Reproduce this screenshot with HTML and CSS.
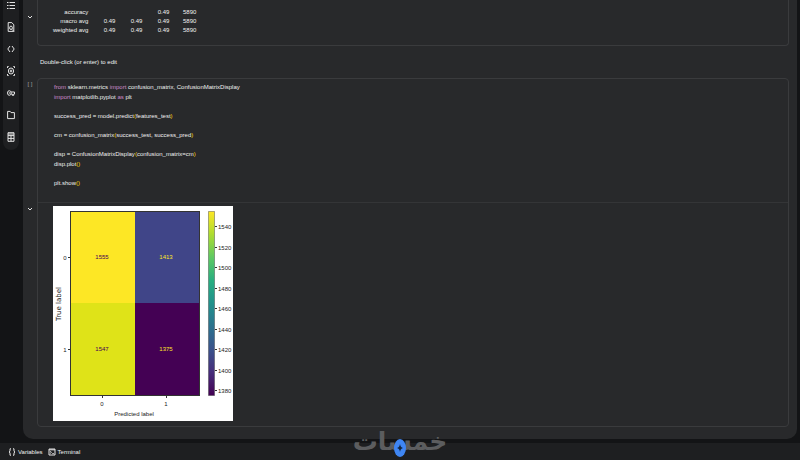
FILE: index.html
```
<!DOCTYPE html>
<html lang="en">
<head>
  <meta charset="UTF-8" />
  <meta name="viewport" content="width=device-width, initial-scale=1" />
  <title>Notebook</title>
  <link rel="stylesheet" href="styles.css">
</head>
<body>
  <div class="workspace">
    <nav class="rail" aria-label="Sidebar">
      <button class="rail-button" aria-label="Table of contents">
        <svg viewBox="0 0 8 10"><path d="M0 2.5h1.5M2.5 2.5H8M0 5.5h1.5M2.5 5.5H8M0 8.5h1.5M2.5 8.5H8" /></svg>
      </button>
      <button class="rail-button" aria-label="Find and replace">
        <svg viewBox="0 0 8 10"><path d="M1.2.6h3.6l2 2.2v6.6H1.2zM5 7.4 7 9.5" /><ellipse cx="4" cy="5.8" rx="1.4" ry="1.7" /></svg>
      </button>
      <button class="rail-button" aria-label="Code snippets">
        <svg viewBox="0 0 8 10"><path d="M3 2 .8 5 3 8M5 2l2.2 3L5 8" /></svg>
      </button>
      <button class="rail-button" aria-label="Inspect">
        <svg viewBox="0 0 8 10"><path d="M.5 2V.5h1.2M6.3.5h1.2V2M.5 8v1.5h1.2M6.3 9.5h1.2V8" /><ellipse cx="4" cy="5" rx="2.6" ry="3" /><ellipse cx="4" cy="5" rx=".8" ry="1" /></svg>
      </button>
      <button class="rail-button" aria-label="Secrets">
        <svg viewBox="0 0 8 10"><ellipse cx="2.3" cy="5" rx="1.8" ry="2.3" /><path d="M4 4h3.5v2h-.8v1.4H5.3V6H4" /><circle cx="2.3" cy="5" r=".3" /></svg>
      </button>
      <button class="rail-button" aria-label="Files">
        <svg viewBox="0 0 8 10"><path d="M.6 1.4h2.6l.8 1.2h3.4v6H.6z" /></svg>
      </button>
      <button class="rail-button" aria-label="Data table">
        <svg viewBox="0 0 8 10"><path d="M1 .7h6v8.6H1zM1 3.6h6M1 6.4h6M4 3.6v5.7M1 2h6" /></svg>
      </button>
    </nav>

    <main class="notebook">
      <section class="cell">
        <div class="gutter gutter-report">
          <button class="toggle" aria-label="Toggle output"><svg viewBox="0 0 6 6"><path d="m1 2 2 2 2-2" /></svg></button>
        </div>
        <div class="frame frame-report">
          <table class="report">
            <tr><th scope="row">accuracy</th><td></td><td></td><td>0.49</td><td>5890</td></tr>
            <tr><th scope="row">macro avg</th><td>0.49</td><td>0.49</td><td>0.49</td><td>5890</td></tr>
            <tr><th scope="row">weighted avg</th><td>0.49</td><td>0.49</td><td>0.49</td><td>5890</td></tr>
          </table>
        </div>
      </section>

      <p class="hint">Double-click (or enter) to edit</p>

      <section class="cell">
        <div class="gutter gutter-code">
          <span class="run">[ ]</span>
          <button class="toggle" aria-label="Toggle output"><svg viewBox="0 0 6 6"><path d="m1 2 2 2 2-2" /></svg></button>
        </div>
        <div class="frame">
          <div class="code">
            <div class="line"><b>from</b> sklearn.metrics <b>import</b> confusion_matrix, ConfusionMatrixDisplay</div>
            <div class="line"><b>import</b> matplotlib.pyplot <b>as</b> plt</div>
            <div class="line"></div>
            <div class="line">success_pred = model.predict<i>(</i>features_test<i>)</i></div>
            <div class="line"></div>
            <div class="line">cm = confusion_matrix<i>(</i>success_test, success_pred<i>)</i></div>
            <div class="line"></div>
            <div class="line">disp = ConfusionMatrixDisplay<i>(</i>confusion_matrix=cm<i>)</i></div>
            <div class="line">disp.plot<i>()</i></div>
            <div class="line"></div>
            <div class="line">plt.show<i>()</i></div>
          </div>
          <div class="output">
            <svg class="plot" viewBox="0 0 180 215" role="img" aria-label="Confusion matrix">
              <defs>
                <linearGradient id="viridis" x1="0" y1="0" x2="0" y2="1">
                  <stop offset="0" stop-color="#fde725" />
                  <stop offset=".125" stop-color="#addc30" />
                  <stop offset=".25" stop-color="#5ec962" />
                  <stop offset=".375" stop-color="#28ae80" />
                  <stop offset=".5" stop-color="#21918c" />
                  <stop offset=".625" stop-color="#2c728e" />
                  <stop offset=".75" stop-color="#3b528b" />
                  <stop offset=".875" stop-color="#472d7b" />
                  <stop offset="1" stop-color="#440154" />
                </linearGradient>
              </defs>
              <rect width="180" height="215" fill="#fff" stroke="none" />
              <g stroke="none" shape-rendering="crispEdges">
                <rect x="17" y="5" width="65" height="92" fill="#fde725" />
                <rect x="82" y="5" width="65" height="92" fill="#404588" />
                <rect x="17" y="97" width="65" height="93" fill="#dfe318" />
                <rect x="82" y="97" width="65" height="93" fill="#440154" />
              </g>
              <rect class="axis" x="17.5" y="5.5" width="129" height="184" />
              <rect class="axis colorbar" x="155.5" y="5.5" width="6" height="184" />
              <path class="axis" d="M15 51.5h2M15 143.5h2M49.5 190v2M113.5 190v2M162 20.5h2M162 41.5h2M162 61.5h2M162 82.5h2M162 102.5h2M162 123.5h2M162 143.5h2M162 164.5h2M162 184.5h2" />
              <g class="middle">
                <text class="on-light" x="49" y="53">1555</text>
                <text class="on-dark" x="113" y="53">1413</text>
                <text class="on-light" x="49" y="145">1547</text>
                <text class="on-dark" x="113" y="145">1375</text>
                <text x="12" y="54">0</text>
                <text x="12" y="146">1</text>
                <text x="49" y="200">0</text>
                <text x="113" y="200">1</text>
                <text x="81" y="210">Predicted label</text>
                <text class="y-label" transform="translate(8 98) rotate(-90)">True label</text>
              </g>
              <text x="165" y="23">1540</text>
              <text x="165" y="44">1520</text>
              <text x="165" y="64">1500</text>
              <text x="165" y="85">1480</text>
              <text x="165" y="105">1460</text>
              <text x="165" y="126">1440</text>
              <text x="165" y="146">1420</text>
              <text x="165" y="167">1400</text>
              <text x="165" y="187">1380</text>
            </svg>
          </div>
        </div>
      </section>
    </main>
  </div>

  <footer class="statusbar">
    <button class="status-button">
      <svg viewBox="0 0 8 8"><path d="M3 .8H2v2.4L1 4l1 .8v2.4h1M5 .8h1v2.4L7 4l-1 .8v2.4H5" /></svg>
      Variables
    </button>
    <button class="status-button">
      <svg viewBox="0 0 8 8"><path d="M1 1h6v6H1zM1 1.8h6M2.2 3.4l1.2 1-1.2 1M4.3 5.6h1.5" /></svg>
      Terminal
    </button>
  </footer>

  <div class="watermark" lang="ar" dir="rtl">خمسات</div>
  <button class="assistant" aria-label="Assistant">
    <svg viewBox="0 0 8 10"><path d="M4 1q.5 3.5 3 4-2.5.5-3 4-.5-3.5-3-4 2.5-.5 3-4z" /></svg>
  </button>
</body>
</html>
```
FILE: styles.css
```
* {
  box-sizing: border-box;
}

body {
  margin: 0;
  min-height: 100vh;
  display: flex;
  flex-direction: column;
  position: relative;
  overflow: hidden;
  background: #131416;
  color: #f0f0f0;
  font-family: "Liberation Sans", Arial, sans-serif;
  font-size: 6px;
}

button {
  padding: 0;
  border: 0;
  background: none;
  color: inherit;
  font: inherit;
  cursor: pointer;
}

svg {
  display: block;
  fill: none;
  stroke: #e4e4e4;
  stroke-width: 1;
}

.workspace {
  flex: 1;
  display: flex;
  align-items: flex-start;
  gap: 4px;
  padding-right: 3px;
}

.rail {
  display: flex;
  flex-direction: column;
  gap: 12px;
  width: 16px;
  margin-left: 3px;
  padding-bottom: 8px;
  align-items: center;
  border-radius: 0 0 8px 8px;
  background: #1e1f21;
}

.rail-button svg {
  width: 8px;
  height: 10px;
}

.notebook {
  flex: 1;
  padding: 0 8px 12px 0;
  border-radius: 0 0 10px 10px;
  background: #28292b;
}

.cell {
  display: flex;
}

.gutter {
  width: 14px;
  display: flex;
  flex-direction: column;
  align-items: center;
}

.gutter-report {
  padding-top: 14px;
}

.gutter-code {
  padding-top: 2px;
  gap: 118px;
}

.toggle svg {
  width: 6px;
  height: 6px;
}

.run {
  line-height: 8px;
  color: #a0a0a0;
}

.frame {
  flex: 1;
  border: 1px solid #3a3b3d;
  border-radius: 4px;
}

.frame-report {
  height: 46px;
  padding: 8px 15px;
  border-top: 0;
  border-radius: 0 0 4px 4px;
}

.report {
  border-collapse: collapse;
  line-height: 8px;
}

.report th,
.report td {
  height: 9px;
  padding: 0;
  min-width: 27px;
  text-align: right;
  vertical-align: top;
  font-weight: normal;
  white-space: nowrap;
}

.hint {
  margin: 0;
  padding: 11px 17px;
  line-height: 10px;
}

.code {
  padding: 4px 16px 13px;
  line-height: 1.6;
}

.line {
  min-height: 1.6em;
  white-space: pre;
}

.code b {
  font-weight: normal;
  color: #d08ccb;
}

.code i {
  font-style: normal;
  color: #ffd700;
}

.output {
  padding: 3px 15px 5px;
  border-top: 1px solid #343537;
}

.plot {
  width: 180px;
  height: 215px;
}

.plot text {
  fill: #222;
  stroke: none;
}

.plot .on-light {
  fill: #440154;
}

.plot .on-dark {
  fill: #fde725;
}

.plot .axis {
  stroke: #333;
}

.plot .colorbar {
  fill: url(#viridis);
  stroke-opacity: .4;
}

.middle {
  text-anchor: middle;
}

.plot .y-label {
  font-family: "DejaVu Sans", sans-serif;
  font-size: 7px;
}

.statusbar {
  display: flex;
  align-items: center;
  gap: 5px;
  height: 17px;
  margin-top: 4px;
  padding: 0 8px;
  background: #1e1f21;
}

.status-button {
  display: flex;
  align-items: center;
  gap: 2px;
}

.status-button svg {
  width: 8px;
  height: 8px;
}

.watermark {
  position: absolute;
  left: 0;
  right: 0;
  bottom: 0;
  text-align: center;
  font: bold 25px/36px "DejaVu Sans", sans-serif;
  color: #5c5d5f;
}

.assistant {
  position: absolute;
  left: calc(50% - 6px);
  bottom: 3px;
  width: 12px;
  height: 18px;
  border-radius: 50%;
  background: #3f86f4;
}

.assistant svg {
  width: 8px;
  height: 10px;
  margin: auto;
  fill: #14263f;
  stroke: none;
}
```
